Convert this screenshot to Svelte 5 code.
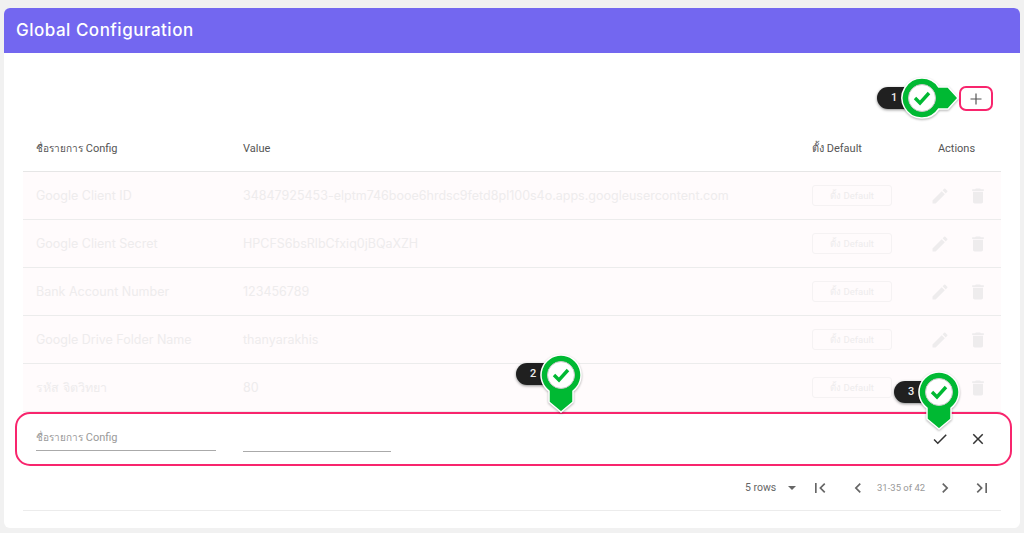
<script>
  const rows = [
    ['Google Client ID', '34847925453-elptm746booe6hrdsc9fetd8pl100s4o.apps.googleusercontent.com'],
    ['Google Client Secret', 'HPCFS6bsRlbCfxiq0jBQaXZH'],
    ['Bank Account Number', '123456789'],
    ['Google Drive Folder Name', 'thanyarakhis'],
    ['รหัส จิตวิทยา', '80']
  ];
</script>

<div class="page">
  <section class="card">
    <header class="title">Global Configuration</header>
    <div class="body">
      <div class="toolbar">
        <button class="add" aria-label="add">
          <svg width="14" height="14" viewBox="0 0 14 14"><path d="M7 1.5v11M1.5 7h11" stroke="#555" stroke-width="1.2" fill="none"/></svg>
        </button>
      </div>
      <div class="row head">
        <div class="c1"><span class="thai">ชื่อรายการ</span> Config</div>
        <div class="c2">Value</div>
        <div class="c3">ตั้ง Default</div>
        <div class="c4 center">Actions</div>
      </div>
      {#each rows as r}
        <div class="row data">
          <div class="c1 cell">{r[0]}</div>
          <div class="c2 cell">{r[1]}</div>
          <div class="c3"><span class="dbtn">ตั้ง Default</span></div>
          <div class="c4 acts">
            <svg width="20" height="20" viewBox="0 0 24 24"><path d="M3 17.25V21h3.75L17.81 9.94l-3.75-3.75L3 17.25zM20.71 7.04a1 1 0 0 0 0-1.41l-2.34-2.34a1 1 0 0 0-1.41 0l-1.83 1.83 3.75 3.75 1.83-1.83z" fill="#eeeced"/></svg>
            <svg width="20" height="20" viewBox="0 0 24 24"><path d="M6 19c0 1.1.9 2 2 2h8c1.1 0 2-.9 2-2V7H6v12zM19 4h-3.5l-1-1h-5l-1 1H5v2h14V4z" fill="#eeeced"/></svg>
          </div>
        </div>
      {/each}
      <div class="row edit">
        <div class="c1"><div class="input"><span class="thai">ชื่อรายการ</span> Config</div></div>
        <div class="c2"><div class="input short"></div></div>
        <div class="c3"></div>
        <div class="c4 eacts">
          <svg width="18" height="18" viewBox="0 0 24 24"><path d="M9 16.17 4.83 12l-1.42 1.41L9 19 21 7l-1.41-1.41z" fill="#333"/></svg>
          <svg width="18" height="18" viewBox="0 0 24 24"><path d="M19 6.41 17.59 5 12 10.59 6.41 5 5 6.41 10.59 12 5 17.59 6.41 19 12 13.41 17.59 19 19 17.59 13.41 12z" fill="#333"/></svg>
        </div>
      </div>
      <div class="pager">
        <span class="rowsel">5 rows</span>
        <svg class="caret" width="8" height="4" viewBox="0 0 10 5"><path d="M0 0h10L5 5z" fill="#666"/></svg>
        <svg class="ic first" width="20" height="20" viewBox="0 0 24 24"><path d="M18.41 16.59 13.82 12l4.59-4.59L17 6l-6 6 6 6zM6 6h2v12H6z" fill="#666"/></svg>
        <svg class="ic prev" width="20" height="20" viewBox="0 0 24 24"><path d="M15.41 16.59 10.83 12l4.58-4.59L14 6l-6 6 6 6z" fill="#666"/></svg>
        <span class="count">31-35 of 42</span>
        <svg class="ic next" width="20" height="20" viewBox="0 0 24 24"><path d="M8.59 16.59 13.17 12 8.59 7.41 10 6l6 6-6 6z" fill="#666"/></svg>
        <svg class="ic last" width="20" height="20" viewBox="0 0 24 24"><path d="M5.59 7.41 10.18 12l-4.59 4.59L7 18l6-6-6-6zM16 6h2v12h-2z" fill="#666"/></svg>
      </div>
    </div>
  </section>

  <div class="outline o-add"></div>
  <div class="outline o-edit"></div>

  <div class="pill p1">1</div>
  <div class="pill p2">2</div>
  <div class="pill p3">3</div>

  <svg class="pin pin1" width="62" height="46" viewBox="0 0 62 46">
    <path d="M21 3a20 20 0 0 1 16.7 9H47L57 23 47 34h-9.300A20 20 0 1 1 21 3z" fill="#00b933" stroke="#fff" stroke-width="1.5"/>
    <circle cx="21" cy="23" r="13.500" fill="#fff" stroke="#c9c9c9"/>
    <path d="M14 23l5 5 9-10" fill="none" stroke="#00b933" stroke-width="3.400"/>
  </svg>
  <svg class="pin pin2" width="46" height="62" viewBox="0 0 46 62">
    <path d="M23 2a20 20 0 0 1 12 36v11L23 59 11 49V38A20 20 0 0 1 23 2z" fill="#00b933" stroke="#fff" stroke-width="1.5"/>
    <circle cx="23" cy="22" r="13.500" fill="#fff" stroke="#c9c9c9"/>
    <path d="M16 22l5 5 9-10" fill="none" stroke="#00b933" stroke-width="3.400"/>
  </svg>
  <svg class="pin pin3" width="46" height="62" viewBox="0 0 46 62">
    <path d="M23 2a20 20 0 0 1 12 36v11L23 59 11 49V38A20 20 0 0 1 23 2z" fill="#00b933" stroke="#fff" stroke-width="1.5"/>
    <circle cx="23" cy="22" r="13.500" fill="#fff" stroke="#c9c9c9"/>
    <path d="M16 22l5 5 9-10" fill="none" stroke="#00b933" stroke-width="3.400"/>
  </svg>
</div>

<style>
  :global(body) { margin: 0; background: #f1f1f1; }
  .page {
    position: relative;
    box-sizing: border-box;
    width: 1024px;
    height: 533px;
    padding: 8px 4px 5px;
    overflow: hidden;
    font-family: Roboto, "Noto Sans", sans-serif;
  }
  .card {
    height: 520px;
    background: #fff;
    border-radius: 6px;
    overflow: hidden;
  }
  .title {
    height: 45px;
    box-sizing: border-box;
    padding-left: 12px;
    background: #7367f0;
    color: #fff;
    font: 500 17px/44px Inter, sans-serif;
    letter-spacing: 0.5px;
  }
  .body { padding: 0 19px; }
  .toolbar {
    height: 74px;
    display: flex;
    justify-content: flex-end;
    padding: 33px 8px 0 0;
    box-sizing: border-box;
  }
  .add {
    width: 34px;
    height: 25px;
    padding: 0;
    border: 0;
    background: none;
    display: flex;
    align-items: center;
    justify-content: center;
  }
  .row {
    display: grid;
    grid-template-columns: 220px 569px 100px 89px;
    align-items: center;
    height: 48px;
    box-sizing: border-box;
  }
  .row > div:first-child { padding-left: 13px; }
  .thai { font-size: 10px; }
  .head {
    height: 45px;
    padding-bottom: 2px;
    border-bottom: 1px solid #e6e6e6;
    font-size: 11px;
    color: #555;
  }
  .center { text-align: center; }
  .data {
    background: #fffbfc;
    border-bottom: 1px solid #ececec;
  }
  .cell {
    font: 400 12.5px Inter, sans-serif;
    color: #eeeced;
    white-space: nowrap;
  }
  .dbtn {
    display: block;
    box-sizing: border-box;
    width: 80px;
    height: 21px;
    border: 1px solid #f5f2f3;
    border-radius: 3px;
    text-align: center;
    font-size: 9.5px;
    line-height: 19px;
    color: #eeeced;
  }
  .acts { display: flex; gap: 18px; padding-left: 18px; }
  .edit { align-items: start; height: 48px; }
  .input {
    width: 180px;
    height: 26px;
    margin-top: 13px;
    box-sizing: border-box;
    border-bottom: 1px solid #aaa;
    font-size: 11px;
    line-height: 26px;
    color: #9a9a9a;
  }
  .short { width: 148px; height: 27px; }
  .eacts { display: flex; gap: 20px; padding: 18px 0 0 19px; }
  .pager {
    position: relative;
    height: 50px;
    border-bottom: 1px solid #ececec;
    font-size: 10.5px;
    color: #666;
  }
  .pager > * { position: absolute; }
  .rowsel { left: 722px; top: 21px; }
  .caret { left: 765px; top: 26px; }
  .ic { top: 18px; }
  .first { left: 787px; }
  .prev { left: 825px; }
  .count { left: 854px; top: 22px; font-size: 9.5px; color: #999; }
  .next { left: 912px; }
  .last { left: 949px; }
  .outline {
    position: absolute;
    box-sizing: border-box;
    border: 2px solid #f8256d;
    background: transparent;
  }
  .o-add { left: 959px; top: 86px; width: 34px; height: 25px; border-radius: 7px; }
  .o-edit { left: 15px; top: 412px; width: 997px; height: 54px; border-radius: 15px; }
  .pill {
    position: absolute;
    box-sizing: border-box;
    width: 50px;
    height: 22px;
    padding-left: 14px;
    background: #202020;
    border-radius: 11px;
    box-shadow: 0 1px 3px rgba(0,0,0,.45), 0 0 0 1px #fff;
    color: #eee;
    font: 500 11px/21px Roboto, sans-serif;
  }
  .p1 { left: 877px; top: 87px; }
  .p2 { left: 516px; top: 363px; }
  .p3 { left: 894px; top: 381px; }
  .pin { position: absolute; filter: drop-shadow(0 1px 1px rgba(0,0,0,.3)); }
  .pin1 { left: 901px; top: 75px; }
  .pin2 { left: 538px; top: 353px; }
  .pin3 { left: 916px; top: 370px; }
</style>
